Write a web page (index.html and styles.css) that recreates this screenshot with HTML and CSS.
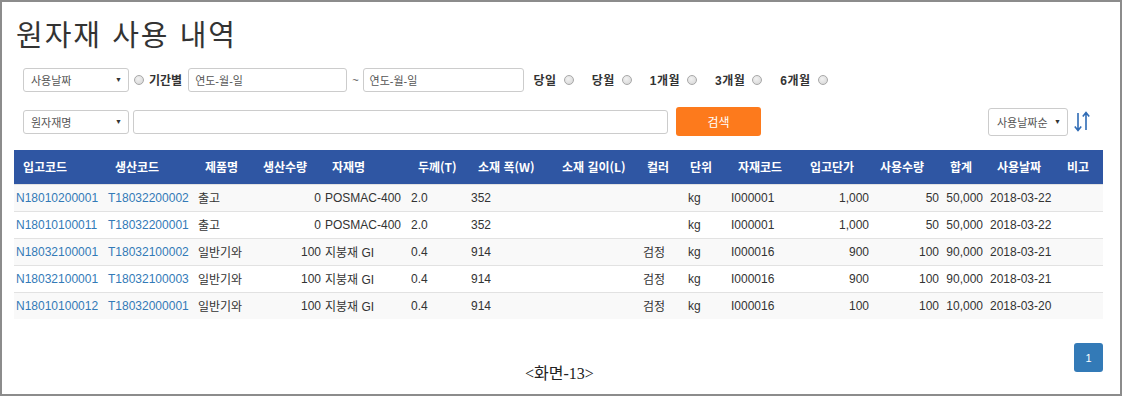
FILE: index.html
```html
<!DOCTYPE html>
<html lang="ko">
<head>
<meta charset="utf-8">
<title>원자재 사용 내역</title>
<link rel="stylesheet" href="styles.css">
</head>
<body>
<div class="frame">
  <h1 class="title">원자재 사용 내역</h1>

  <div class="filter-row row1">
    <div class="select sel-date"><span>사용날짜</span><span class="caret">▼</span></div>
    <span class="radio r-period"></span>
    <span class="label lbl-period">기간별</span>
    <div class="input date-in"><span class="ph">연도-월-일</span></div>
    <span class="tilde">~</span>
    <div class="input date-in2"><span class="ph">연도-월-일</span></div>
    <span class="label q q1">당일</span><span class="radio"></span>
    <span class="label q">당월</span><span class="radio"></span>
    <span class="label q">1개월</span><span class="radio"></span>
    <span class="label q">3개월</span><span class="radio"></span>
    <span class="label q">6개월</span><span class="radio"></span>
  </div>

  <div class="filter-row row2">
    <div class="select sel-name"><span>원자재명</span><span class="caret">▼</span></div>
    <div class="input text-in"></div>
    <button class="btn-search">검색</button>
    <div class="spacer"></div>
    <div class="select sel-sort"><span>사용날짜순</span><span class="caret">▼</span></div>
    <svg class="sort-icon" width="18" height="22" viewBox="0 0 18 22">
      <path d="M5 2 V19 M1.8 15.5 L5 19.5 L8.2 15.5" fill="none" stroke="#2f6bb5" stroke-width="1.6"/>
      <path d="M13 19 V2 M9.8 5.5 L13 1.5 L16.2 5.5" fill="none" stroke="#2f6bb5" stroke-width="1.6"/>
    </svg>
  </div>

  <table class="grid">
    <colgroup>
      <col style="width:92px"><col style="width:90px"><col style="width:58px"><col style="width:69px">
      <col style="width:86px"><col style="width:60px"><col style="width:84px"><col style="width:85px">
      <col style="width:43px"><col style="width:48px"><col style="width:72px"><col style="width:70px">
      <col style="width:70px"><col style="width:47px"><col style="width:70px"><col style="width:45px">
    </colgroup>
    <thead>
      <tr>
        <th>입고코드</th><th>생산코드</th><th>제품명</th><th>생산수량</th><th>자재명</th><th>두께(T)</th><th>소재 폭(W)</th><th>소재 길이(L)</th><th>컬러</th><th>단위</th><th>자재코드</th><th>입고단가</th><th>사용수량</th><th>합계</th><th>사용날짜</th><th>비고</th>
      </tr>
    </thead>
    <tbody>
      <tr>
        <td class="link">N18010200001</td><td class="link">T18032200002</td><td>출고</td><td class="num">0</td><td>POSMAC-400</td><td>2.0</td><td>352</td><td></td><td class="color"></td><td class="unit">kg</td><td>I000001</td><td class="num">1,000</td><td class="num">50</td><td class="sum">50,000</td><td>2018-03-22</td><td></td>
      </tr>
      <tr>
        <td class="link">N18010100011</td><td class="link">T18032200001</td><td>출고</td><td class="num">0</td><td>POSMAC-400</td><td>2.0</td><td>352</td><td></td><td class="color"></td><td class="unit">kg</td><td>I000001</td><td class="num">1,000</td><td class="num">50</td><td class="sum">50,000</td><td>2018-03-22</td><td></td>
      </tr>
      <tr>
        <td class="link">N18032100001</td><td class="link">T18032100002</td><td>일반기와</td><td class="num">100</td><td>지붕재 GI</td><td>0.4</td><td>914</td><td></td><td class="color">검정</td><td class="unit">kg</td><td>I000016</td><td class="num">900</td><td class="num">100</td><td class="sum">90,000</td><td>2018-03-21</td><td></td>
      </tr>
      <tr>
        <td class="link">N18032100001</td><td class="link">T18032100003</td><td>일반기와</td><td class="num">100</td><td>지붕재 GI</td><td>0.4</td><td>914</td><td></td><td class="color">검정</td><td class="unit">kg</td><td>I000016</td><td class="num">900</td><td class="num">100</td><td class="sum">90,000</td><td>2018-03-21</td><td></td>
      </tr>
      <tr>
        <td class="link">N18010100012</td><td class="link">T18032000001</td><td>일반기와</td><td class="num">100</td><td>지붕재 GI</td><td>0.4</td><td>914</td><td></td><td class="color">검정</td><td class="unit">kg</td><td>I000016</td><td class="num">100</td><td class="num">100</td><td class="sum">10,000</td><td>2018-03-20</td><td></td>
      </tr>
    </tbody>
  </table>

  <div class="footer">
    <div></div>
    <div class="caption">&lt;화면-13&gt;</div>
    <div class="pager"><span class="page active">1</span></div>
  </div>
</div>
</body>
</html>
```

FILE: styles.css
```css
* { box-sizing: border-box; }
html, body { margin: 0; padding: 0; background: #fff; }
body {
  font-family: "Liberation Sans", "Noto Sans CJK KR", sans-serif;
  color: #333;
  font-size: 12px;
}
.frame {
  width: 1122px;
  height: 396px;
  border: 2px solid #8c8c8c;
  padding: 0 17px 0 12px;
  overflow: hidden;
}
.title {
  margin: 0;
  padding: 12px 0 0 2px;
  height: 56px;
  font-family: "Noto Sans CJK KR", "Liberation Sans", sans-serif;
  font-weight: normal;
  font-size: 29px;
  letter-spacing: 2px;
  line-height: 38px;
  color: #333;
}
.filter-row {
  display: flex;
  align-items: center;
  padding-left: 9px;
}
.row1 { height: 25px; margin-top: 9px; }
.row2 { height: 29px; margin-top: 15px; }

.select {
  display: flex;
  align-items: center;
  justify-content: space-between;
  height: 24px;
  border: 1px solid #ccc;
  border-radius: 3px;
  background: #fff;
  padding: 0 6px 0 7px;
  font-size: 11px;
  color: #555;
}
.select .caret { font-size: 7px; color: #333; }
.sel-date, .sel-name { width: 106px; }
.sel-sort { width: 80px; height: 28px; padding-left: 8px; }

.radio {
  display: inline-block;
  width: 10px;
  height: 10px;
  border-radius: 50%;
  border: 1px solid #a8a8a8;
  background: radial-gradient(circle at 40% 35%, #f2f2f2, #d4d4d4);
  margin-left: 7px;
}
.r-period { margin-left: 5px; }
.label { font-weight: bold; font-size: 12px; color: #333; }
.lbl-period { margin-left: 5px; }
.input {
  height: 24px;
  border: 1px solid #ccc;
  border-radius: 3px;
  background: #fff;
  display: flex;
  align-items: center;
  padding-left: 6px;
}
.ph { font-size: 11px; color: #555; }
.date-in { width: 159px; margin-left: 6px; }
.tilde { margin: 0 4px 0 5px; font-size: 11px; color: #555; }
.date-in2 { width: 161px; }
.q { margin-left: 18px; letter-spacing: 0.5px; }
.q1 { margin-left: 10px; }

.text-in { width: 535px; margin-left: 4px; }
.btn-search {
  width: 85px;
  height: 29px;
  margin-left: 8px;
  border: none;
  border-radius: 3px;
  background: #fd7a1c;
  color: #fff;
  font-family: "Noto Sans CJK KR", sans-serif;
  font-size: 12px;
  padding: 0;
}
.spacer { flex: 1; }
.sort-icon { margin-left: 5px; margin-right: 12px; display: block; }

.grid {
  margin-top: 14px;
  width: 1089px;
  border-collapse: collapse;
  table-layout: fixed;
}
.grid th {
  background: #2f56a3;
  color: #fff;
  font-family: "Noto Sans CJK KR", "Liberation Sans", sans-serif;
  font-weight: bold;
  font-size: 12px;
  height: 34px;
  text-align: left;
  padding: 0 0 0 9px;
  white-space: nowrap;
}
.grid td {
  height: 27px;
  padding: 0 0 0 2px;
  font-size: 12px;
  white-space: nowrap;
  border-top: 1px solid #e2e2e2;
  color: #333;
}
.grid tbody tr:nth-child(odd) td { background: #f9f9f9; }
.grid td.link { color: #337ab7; }
.grid td.num { text-align: right; padding: 0 2px 0 0; }
.grid td.sum { text-align: right; padding: 0 5px 0 0; }
.grid td.color { padding-left: 5px; }
.grid td.unit { padding-left: 7px; }

.footer {
  display: grid;
  grid-template-columns: 1fr auto 1fr;
  margin-top: 24px;
}
.caption {
  align-self: end;
  font-family: "Liberation Serif", "Noto Sans CJK KR", serif;
  font-size: 16px;
  color: #222;
  line-height: 18px;
  padding-left: 2px;
  margin-bottom: -3px;
}
.pager { display: flex; justify-content: flex-end; }
.page {
  display: flex;
  align-items: center;
  justify-content: center;
  width: 29px;
  height: 29px;
  border-radius: 3px;
  background: #337ab7;
  color: #fff;
  font-size: 11px;
  margin-bottom: 8px;
}
```
